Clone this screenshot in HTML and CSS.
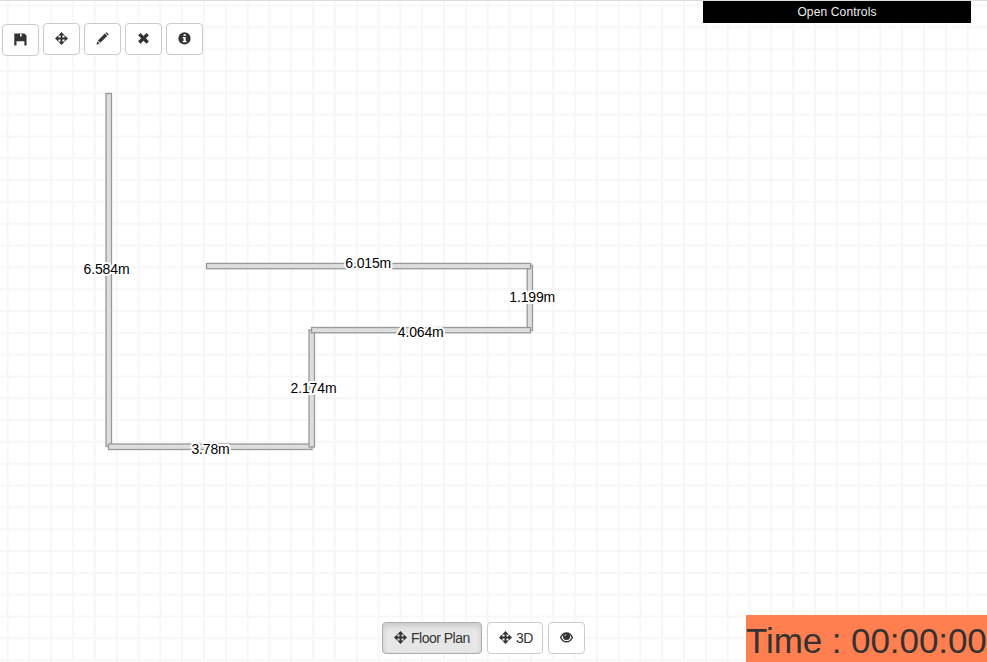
FILE: index.html
```html
<!DOCTYPE html>
<html lang="en">
<head>
<meta charset="utf-8">
<title>Floor Plan</title>
<link rel="stylesheet" href="styles.css">
</head>
<body>
<svg class="plan" width="987" height="662">
  <defs>
    <pattern id="grid" x="-3.3" y="-5.4" width="21.82" height="21.82" patternUnits="userSpaceOnUse">
      <path d="M10.91 0V21.82M0 10.91H21.82" stroke="#f7f7f7" stroke-width="2"/>
    </pattern>
  </defs>
  <rect width="987" height="662" fill="url(#grid)"/>
  <g class="walls">
    <rect x="106" y="93.500" width="5.500" height="353"/>
    <rect x="108.500" y="444" width="203.500" height="5.500"/>
    <rect x="309" y="330" width="5.500" height="117"/>
    <rect x="527.200" y="265.500" width="5.300" height="65"/>
    <rect x="311.500" y="327.500" width="219" height="5.300"/>
    <rect x="206.500" y="263.400" width="324" height="5.300"/>
  </g>
  <g class="lengths">
    <text x="106.500" y="273.500">6.584m</text>
    <text x="210.500" y="453.500">3.78m</text>
    <text x="313.500" y="392.500">2.174m</text>
    <text x="420.700" y="337">4.064m</text>
    <text x="532.200" y="302">1.199m</text>
    <text x="368.200" y="267.500">6.015m</text>
  </g>
</svg>

<svg class="symbols">
  <symbol id="move" viewBox="0 0 14 14"><path d="M7 0 10.500 3.700H8V6h2.300V3.500L14 7l-3.700 3.500V8H8v2.300h2.500L7 14 3.500 10.300H6V8H3.700v2.500L0 7l3.700-3.500V6H6V3.700H3.500Z"/></symbol>
</svg>

<header class="top">
  <nav class="tools">
    <button class="btn save"><svg viewBox="0 0 14 14"><path fill-rule="evenodd" d="M.3.500H2.700v4.500h6.600V.500h1.900L13.500 2.800V13.500H11.200V9H2.700v4.500H.3ZM2.700.500H9.300V5H2.700ZM6.500 1H8.200v2.800H6.500Z"/></svg></button>
    <button class="btn"><svg><use href="#move"/></svg></button>
    <button class="btn"><svg viewBox="0 0 14 14"><path d="M10.200 1 11.400.2 13.700 2.500 12.800 3.800ZM9.500 1.700 12.100 4.300 4.600 11.700 2.100 9.200ZM1.500 9.900 3.900 12.300.5 13.600Z"/></svg></button>
    <button class="btn"><svg viewBox="0 0 14 14"><path d="M3.800 1 7 4.200 10.200 1 12.800 3.600 9.600 6.800l3.200 3.200-2.600 2.600L7 9.400l-3.200 3.200L1.200 10l3.200-3.200-3.200-3.200Z"/></svg></button>
    <button class="btn"><svg viewBox="0 0 14 14"><path fill-rule="evenodd" d="M7 .3a6.600 6.600 0 1 0 0 13.200A6.600 6.600 0 0 0 7 .3ZM6 2.300h2.300v2H6ZM5 5.400h3.300v4.300h1V11H5V9.700h1v-3H5Z"/></svg></button>
  </nav>
  <div class="controls">Open Controls</div>
</header>

<footer class="bottom">
  <nav class="views">
    <button class="btn active"><svg><use href="#move"/></svg><span>Floor Plan</span></button>
    <button class="btn three"><svg><use href="#move"/></svg><span>3D</span></button>
    <button class="btn"><svg viewBox="0 0 14 14"><path d="M.7 7C3.500.6 10.500.6 13.300 7 10.500 13.200 3.500 13.200.7 7Z" fill="#fff" stroke="currentColor" stroke-width="1.500"/><circle cx="7" cy="5.900" r="3.800"/><path d="M5.200 5.500Q5.400 4.200 6.800 4" fill="none" stroke="#fff"/></svg></button>
  </nav>
  <div class="timer">Time : 00:00:00</div>
</footer>
</body>
</html>
```
FILE: styles.css
```css
* { box-sizing: border-box; }

body {
  margin: 0;
  width: 987px;
  height: 662px;
  overflow: hidden;
  display: flex;
  flex-direction: column;
  justify-content: space-between;
  background: #fff;
  border-top: 1px solid #ddd;
  color: #333;
  font: 14px/20px "Liberation Sans", Arial, sans-serif;
}

.plan { position: absolute; top: 0; left: 0; z-index: -1; }
.walls rect { fill: #ddd; stroke: #999; stroke-width: 1.3; }
.lengths text {
  font-size: 14px;
  letter-spacing: -.15px;
  text-anchor: middle;
  fill: #000;
  stroke: #fff;
  stroke-width: 4px;
  stroke-linejoin: round;
  paint-order: stroke;
}
.symbols { display: none; }

.top, .bottom { display: flex; justify-content: space-between; }
.tools { display: flex; gap: 4px; padding: 22px 0 0 2px; }
.views { display: flex; gap: 5px; padding: 7px 0 0 382px; }

.btn {
  display: flex;
  align-items: center;
  gap: 4px;
  height: 32px;
  margin: 0;
  padding: 0 11px;
  border: 1px solid #ccc;
  border-radius: 4px;
  background: #fff;
  color: #333;
  font: inherit;
  letter-spacing: -.5px;
  white-space: nowrap;
}
.btn svg { width: 13px; height: 13px; flex: none; fill: currentColor; position: relative; top: -.5px; }
.btn.save { margin-top: 1px; margin-bottom: -1px; }
.btn.three { width: 56px; }
.btn.active {
  width: 100px;
  background: #e6e6e6;
  border-color: #adadad;
  box-shadow: inset 0 3px 5px rgba(0, 0, 0, .125);
}

.controls {
  width: 268px;
  height: 22px;
  margin-right: 16px;
  background: #000;
  color: #eee;
  font-size: 12px;
  letter-spacing: .14px;
  line-height: 22px;
  text-align: center;
}

.timer {
  width: 241px;
  height: 47px;
  background: coral;
  font-size: 35px;
  letter-spacing: -.08px;
  line-height: 52px;
  white-space: nowrap;
}
```
